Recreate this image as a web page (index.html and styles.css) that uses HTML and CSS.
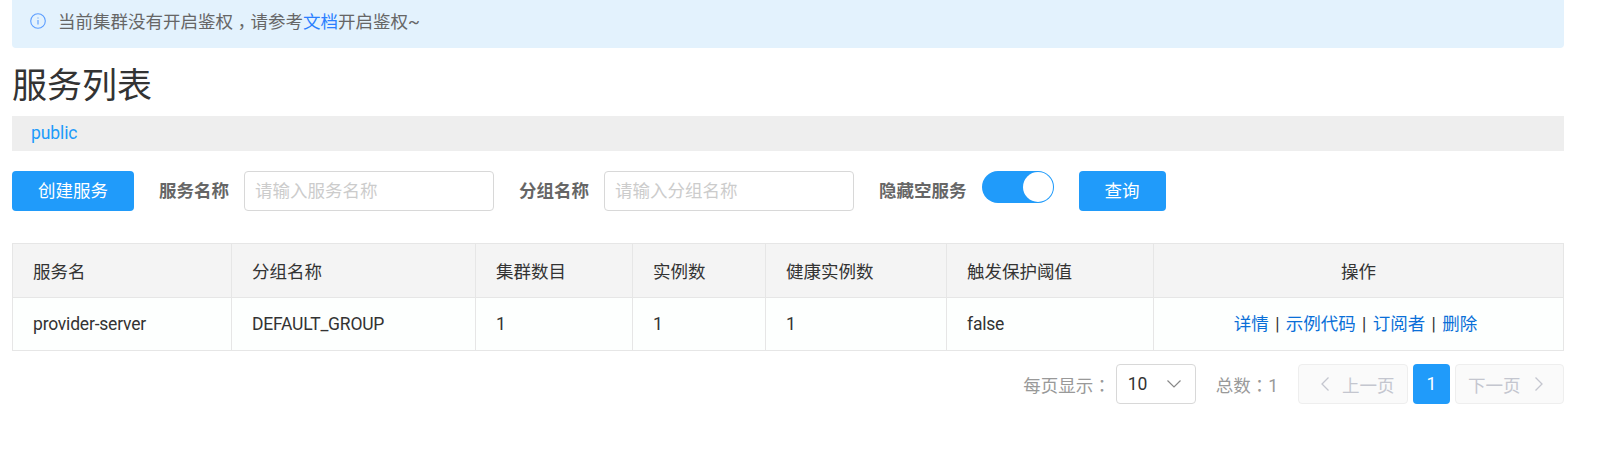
FILE: index.html
```html
<!DOCTYPE html>
<html lang="zh">
<head>
<meta charset="utf-8">
<title>服务列表</title>
<link rel="stylesheet" href="styles.css">
</head>
<body>
<main class="page">
  <div class="notice">
    <svg class="notice-icon" viewBox="0 0 16 16" width="16" height="16"><circle cx="8" cy="8" r="7.3" fill="none" stroke="#5b9dff" stroke-width="1.1"/><path d="M8 4.4v1.2M8 7v4.4" stroke="#5b9dff" stroke-width="1.1" fill="none"/></svg>
    <span>当前集群没有开启鉴权<span class="comma" lang="zh-TW">，</span>请参考<a class="doc-link">文档</a>开启鉴权~</span>
  </div>
  <h1 class="title">服务列表</h1>
  <div class="ns-bar"><a class="ns">public</a></div>
  <div class="toolbar">
    <button class="btn create">创建服务</button>
    <label class="field-label first">服务名称</label>
    <input class="text-input" placeholder="请输入服务名称">
    <label class="field-label">分组名称</label>
    <input class="text-input" placeholder="请输入分组名称">
    <label class="field-label">隐藏空服务</label>
    <span class="switch"><span class="knob"></span></span>
    <button class="btn query">查询</button>
  </div>
  <table class="table">
    <colgroup><col class="c1"><col class="c2"><col class="c3"><col class="c4"><col class="c5"><col class="c6"><col></colgroup>
    <thead>
      <tr><th>服务名</th><th>分组名称</th><th>集群数目</th><th>实例数</th><th>健康实例数</th><th>触发保护阈值</th><th class="center">操作</th></tr>
    </thead>
    <tbody>
      <tr><td>provider-server</td><td>DEFAULT_GROUP</td><td>1</td><td>1</td><td>1</td><td>false</td>
        <td class="center ops"><a class="op">详情</a><span class="sep"> | </span><a class="op">示例代码</a><span class="sep"> | </span><a class="op">订阅者</a><span class="sep"> | </span><a class="op">删除</a></td></tr>
    </tbody>
  </table>
  <div class="pager">
    <span class="pg-label">每页显示<span class="colon" lang="zh-TW">：</span></span>
    <div class="pg-select"><span>10</span><svg viewBox="0 0 16 10" width="16" height="10"><path d="M1.5 1.5 8 8l6.5-6.5" fill="none" stroke="#888" stroke-width="1.2"/></svg></div>
    <span class="pg-total">总数<span class="colon" lang="zh-TW">：</span>1</span>
    <div class="pg-btn prev"><svg viewBox="0 0 10 16" width="10" height="16"><path d="M8.5 1.5 2 8l6.5 6.5" fill="none" stroke="#c4c6cf" stroke-width="1.3"/></svg><span>上一页</span></div>
    <div class="pg-num">1</div>
    <div class="pg-btn next"><span>下一页</span><svg viewBox="0 0 10 16" width="10" height="16"><path d="M1.5 1.5 8 8l-6.5 6.5" fill="none" stroke="#c4c6cf" stroke-width="1.3"/></svg></div>
  </div>
</main>
</body>
</html>
```
FILE: styles.css
```css
* { box-sizing: border-box; }
html, body { margin: 0; padding: 0; background: #fff; }
body {
  font-family: Roboto, "Noto Sans CJK SC", sans-serif;
  font-size: 17.5px;
  color: #333;
  height: 475px;
  overflow: hidden;
}
.page { width: 1552px; margin-left: 12px; }
.notice {
  height: 48px;
  background: #e3f2fd;
  border-radius: 0 0 4px 4px;
  display: flex;
  align-items: center;
  gap: 12px;
  padding: 0 0 6px 18px;
  color: #666;
  font-size: 17.5px;
}
.notice-icon { flex: none; }
.comma {
  font-family: "Noto Sans CJK TC", sans-serif;
  line-height: 1;
  vertical-align: -5px;
}
.colon { font-family: "Noto Sans CJK TC", sans-serif; line-height: 1; }
.doc-link { color: #2a7fff; }
.title {
  margin: 0;
  height: 68px;
  font-size: 35px;
  font-weight: 400;
  line-height: 78px;
  color: #333;
}
.ns-bar {
  height: 35px;
  background: #eee;
  padding-left: 19px;
  line-height: 35px;
  font-size: 17.5px;
}
.ns { color: #209bfa; letter-spacing: -0.1px; }
.toolbar {
  display: flex;
  align-items: flex-start;
  margin-top: 20px;
  height: 40px;
}
.btn {
  height: 40px;
  border: 0;
  border-radius: 4px;
  background: #209bfa;
  color: #fff;
  font: inherit;
  padding: 0 0 3px;
}
.create { width: 122px; margin-right: 25px; }
.query { width: 87px; margin-left: 25px; }
.field-label {
  font-weight: 700;
  color: #666;
  line-height: 40px;
  margin-right: 15px;
}
.text-input {
  width: 250px;
  height: 40px;
  border: 1px solid #d8d8d8;
  border-radius: 4px;
  padding: 0 10px;
  font: inherit;
  margin-right: 25px;
  outline: 0;
}
.text-input::placeholder { color: #ccc; opacity: 1; }
.switch {
  position: relative;
  width: 72px;
  height: 32px;
  border-radius: 16px;
  background: #209bfa;
  display: block;
}
.knob {
  position: absolute;
  right: 1px;
  top: 1px;
  width: 30px;
  height: 30px;
  border-radius: 50%;
  background: #fff;
}
.table {
  margin-top: 32px;
  width: 100%;
  table-layout: fixed;
  border-collapse: collapse;
  border: 1px solid #e6e6e6;
  color: #333;
}
.c1 { width: 219px; }
.c2 { width: 244px; }
.c3 { width: 157px; }
.c4 { width: 133px; }
.c5 { width: 181px; }
.c6 { width: 207px; }
th, td {
  border: 1px solid #e6e6e6;
  padding: 0 0 0 20px;
  text-align: left;
  font-weight: 400;
}
th { height: 54px; background: #f4f4f4; }
td { height: 53px; background: #fdfffe; font-size: 17.5px; letter-spacing: -0.2px; }
th.center, td.center { text-align: center; padding: 0; letter-spacing: 0; }
td.ops { padding: 0 6px 3px 0; }
.op { color: #0a6fd8; }
.sep { padding: 0 2px; }
.pager {
  display: flex;
  justify-content: flex-end;
  align-items: center;
  margin-top: 13px;
  height: 40px;
  color: #999;
  white-space: nowrap;
}
.pg-label { margin-right: 5px; flex: none; }
.pg-total { margin-right: 20px; flex: none; }
.pg-select {
  flex: none;
  width: 80px;
  height: 40px;
  border: 1px solid #d8d8d8;
  border-radius: 4px;
  display: flex;
  align-items: center;
  justify-content: space-between;
  padding: 0 13px 0 11px;
  color: #333;
  margin-right: 20px;
}
.pg-btn {
  flex: none;
  height: 40px;
  border: 1px solid #eee;
  border-radius: 4px;
  background: #fafafa;
  color: #c4c6cf;
  display: flex;
  align-items: center;
}
.prev { width: 110px; padding-left: 21px; margin-right: 5px; gap: 12px; }
.next { width: 109px; padding-left: 12px; margin-left: 5px; gap: 13px; }
.pg-num {
  flex: none;
  width: 37px;
  height: 40px;
  border-radius: 4px;
  background: #209bfa;
  color: #fff;
  display: flex;
  align-items: center;
  justify-content: center;
}
```
